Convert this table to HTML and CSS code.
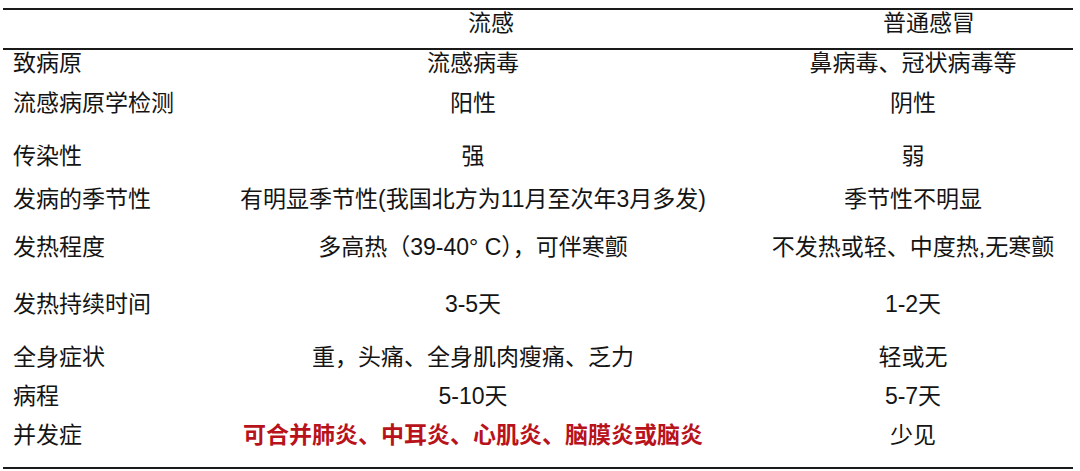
FILE: index.html
```html
<!DOCTYPE html>
<html lang="zh-CN">
<head>
<meta charset="utf-8">
<title>流感与普通感冒对比</title>
<link rel="stylesheet" href="styles.css">
</head>
<body>
<div class="table">
  <div class="row head">
    <div class="cell label"></div>
    <div class="cell mid shift-a">流感</div>
    <div class="cell right shift-b">普通感冒</div>
  </div>
  <div class="body">
    <div class="row h40">
      <div class="cell label">致病原</div>
      <div class="cell mid">流感病毒</div>
      <div class="cell right">鼻病毒、冠状病毒等</div>
    </div>
    <div class="row h53">
      <div class="cell label">流感病原学检测</div>
      <div class="cell mid">阳性</div>
      <div class="cell right">阴性</div>
    </div>
    <div class="row h43">
      <div class="cell label">传染性</div>
      <div class="cell mid">强</div>
      <div class="cell right">弱</div>
    </div>
    <div class="row h48">
      <div class="cell label">发病的季节性</div>
      <div class="cell mid">有明显季节性(我国北方为11月至次年3月多发)</div>
      <div class="cell right">季节性不明显</div>
    </div>
    <div class="row h57">
      <div class="cell label">发热程度</div>
      <div class="cell mid">多高热（39-40° C），可伴寒颤</div>
      <div class="cell right">不发热或轻、中度热,无寒颤</div>
    </div>
    <div class="row h53">
      <div class="cell label">发热持续时间</div>
      <div class="cell mid">3-5天</div>
      <div class="cell right">1-2天</div>
    </div>
    <div class="row h39">
      <div class="cell label">全身症状</div>
      <div class="cell mid">重，头痛、全身肌肉瘦痛、乏力</div>
      <div class="cell right">轻或无</div>
    </div>
    <div class="row h39">
      <div class="cell label">病程</div>
      <div class="cell mid">5-10天</div>
      <div class="cell right">5-7天</div>
    </div>
    <div class="row h43">
      <div class="cell label">并发症</div>
      <div class="cell mid alert">可合并肺炎、中耳炎、心肌炎、脑膜炎或脑炎</div>
      <div class="cell right">少见</div>
    </div>
  </div>
</div>
</body>
</html>
```
FILE: styles.css
```css
html, body {
  margin: 0;
  padding: 0;
  background: #ffffff;
}

body {
  font-family: "Liberation Sans", "Noto Sans CJK SC", sans-serif;
  font-size: 23px;
  color: #141414;
}

.table {
  width: 1070px;
  margin: 8px 0 0 3px;
  border-top: 2px solid #1a1a1a;
  border-bottom: 2px solid #1a1a1a;
}

.row {
  display: grid;
  grid-template-columns: 190px 560px 320px;
  line-height: 23px;
  box-sizing: border-box;
  align-items: start;
}

.head {
  height: 40px;
  padding-top: 2px;
  border-bottom: 2px solid #1a1a1a;
}

.body {
  padding-top: 2px;
}

.cell {
  white-space: nowrap;
}

.label {
  padding-left: 10px;
}

.mid,
.right {
  text-align: center;
}

.shift-a {
  padding-left: 36px;
}

.shift-b {
  padding-left: 32px;
}

.alert {
  color: #b8121b;
  font-weight: 700;
}

.h39 { height: 39px; }
.h40 { height: 40px; }
.h43 { height: 43px; }
.h48 { height: 48px; }
.h53 { height: 53px; }
.h57 { height: 57px; }
```
